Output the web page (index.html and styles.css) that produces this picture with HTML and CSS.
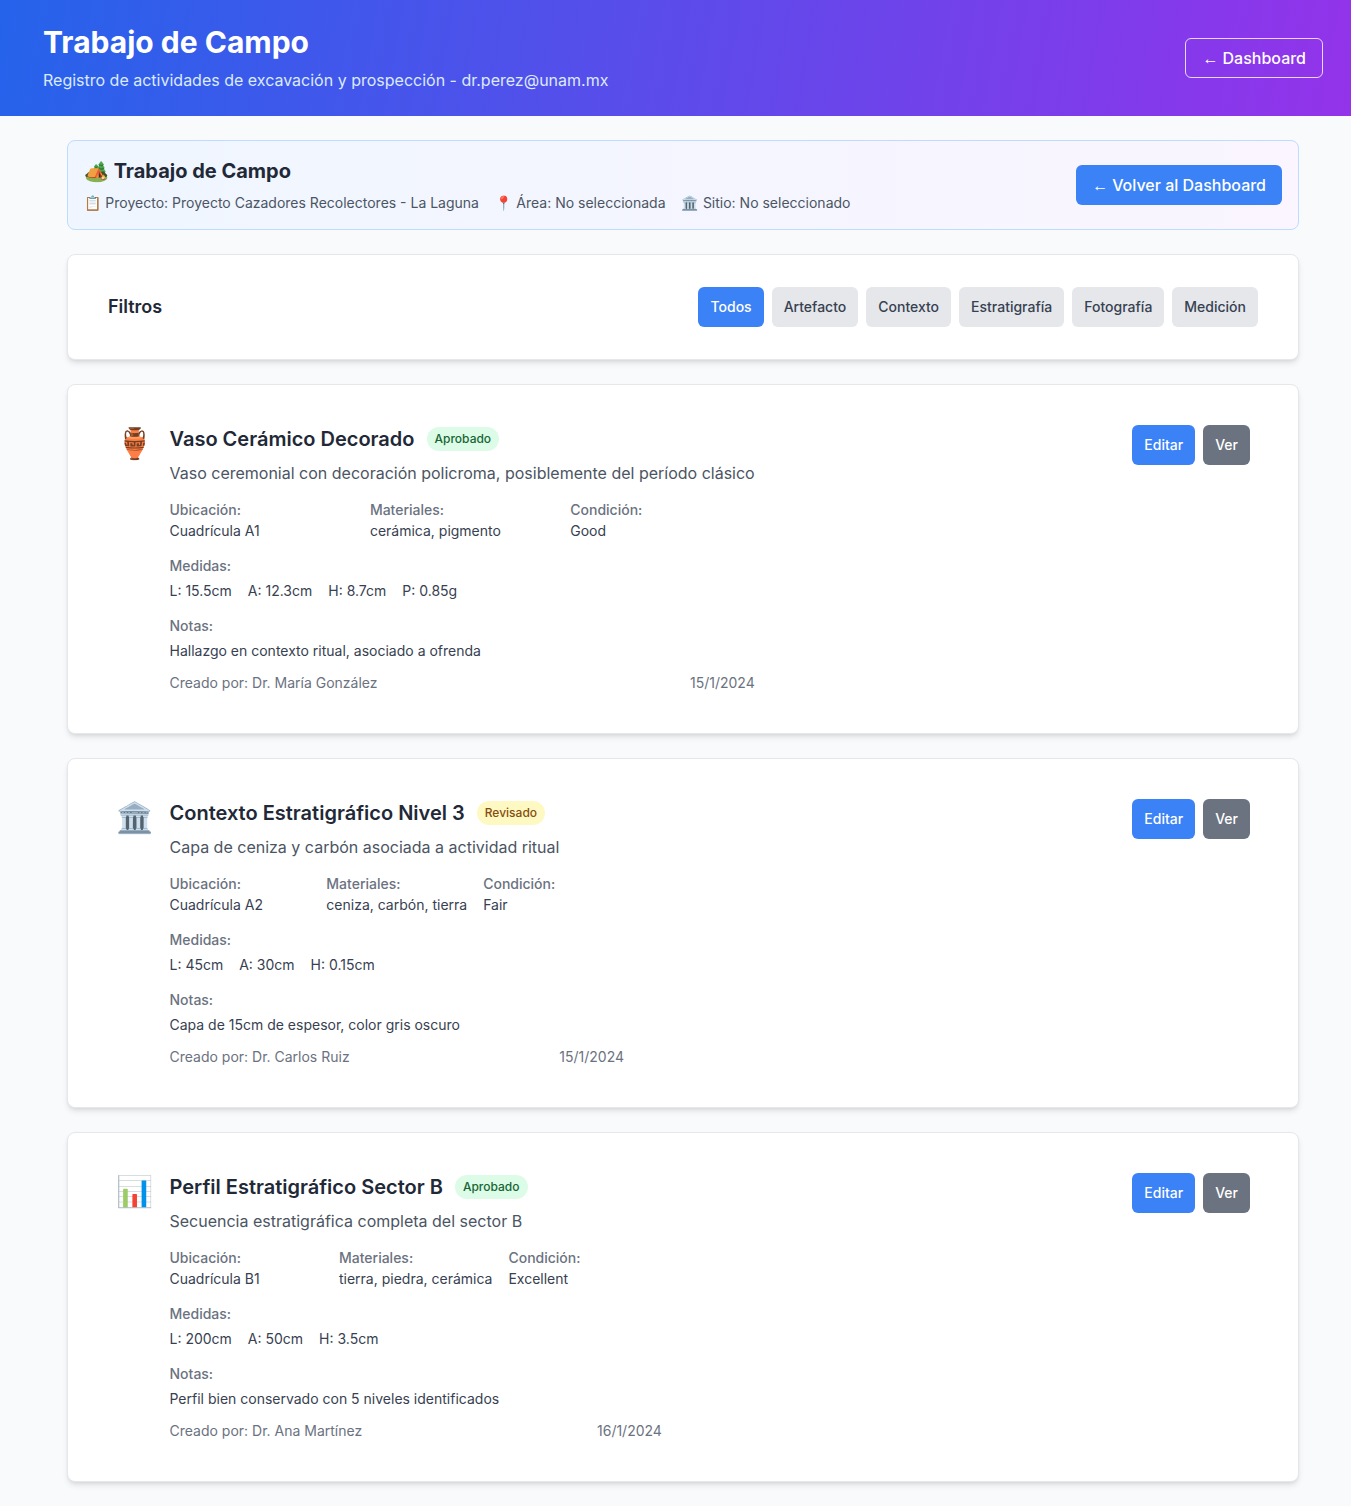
FILE: index.html
```html
<!DOCTYPE html>
<html lang="es">
<head>
  <meta charset="UTF-8">
  <title>Trabajo de Campo</title>
  <link rel="stylesheet" href="styles.css">
</head>
<body>
  <header class="top-header">
    <div>
      <h1 class="top-title">Trabajo de Campo</h1>
      <p class="top-subtitle">Registro de actividades de excavación y prospección - dr.perez@unam.mx</p>
    </div>
    <a class="btn-outline"><span class="arrow">←</span> Dashboard</a>
  </header>

  <main class="main">
    <section class="context-bar">
      <div>
        <h2 class="context-title">🏕️ Trabajo de Campo</h2>
        <div class="context-info">
          <span>📋 Proyecto: Proyecto Cazadores Recolectores - La Laguna</span>
          <span>📍 Área: No seleccionada</span>
          <span>🏛️ Sitio: No seleccionado</span>
        </div>
      </div>
      <a class="btn-back"><span class="arrow">←</span> Volver al Dashboard</a>
    </section>

    <section class="card filters">
      <h3 class="filters-title">Filtros</h3>
      <div class="filter-list">
        <button class="btn btn-blue">Todos</button>
        <button class="btn btn-light">Artefacto</button>
        <button class="btn btn-light">Contexto</button>
        <button class="btn btn-light">Estratigrafía</button>
        <button class="btn btn-light">Fotografía</button>
        <button class="btn btn-light">Medición</button>
      </div>
    </section>

    <article class="card record">
      <div class="record-icon">🏺</div>
      <div class="record-body">
        <div class="record-head">
          <h3 class="record-title">Vaso Cerámico Decorado</h3>
          <span class="badge badge-green">Aprobado</span>
        </div>
        <p class="record-desc">Vaso ceremonial con decoración policroma, posiblemente del período clásico</p>
        <div class="record-grid">
          <div><span class="label">Ubicación:</span><span class="value">Cuadrícula A1</span></div>
          <div><span class="label">Materiales:</span><span class="value">cerámica, pigmento</span></div>
          <div><span class="label">Condición:</span><span class="value">Good</span></div>
        </div>
        <div class="block">
          <span class="label">Medidas:</span>
          <div class="measures"><span>L: 15.5cm</span><span>A: 12.3cm</span><span>H: 8.7cm</span><span>P: 0.85g</span></div>
        </div>
        <div class="block">
          <span class="label">Notas:</span>
          <p class="note">Hallazgo en contexto ritual, asociado a ofrenda</p>
        </div>
        <div class="record-foot"><span>Creado por: Dr. María González</span><span>15/1/2024</span></div>
      </div>
      <div class="record-actions">
        <button class="btn btn-blue">Editar</button>
        <button class="btn btn-gray">Ver</button>
      </div>
    </article>

    <article class="card record">
      <div class="record-icon">🏛️</div>
      <div class="record-body">
        <div class="record-head">
          <h3 class="record-title">Contexto Estratigráfico Nivel 3</h3>
          <span class="badge badge-yellow">Revisado</span>
        </div>
        <p class="record-desc">Capa de ceniza y carbón asociada a actividad ritual</p>
        <div class="record-grid">
          <div><span class="label">Ubicación:</span><span class="value">Cuadrícula A2</span></div>
          <div><span class="label">Materiales:</span><span class="value">ceniza, carbón, tierra</span></div>
          <div><span class="label">Condición:</span><span class="value">Fair</span></div>
        </div>
        <div class="block">
          <span class="label">Medidas:</span>
          <div class="measures"><span>L: 45cm</span><span>A: 30cm</span><span>H: 0.15cm</span></div>
        </div>
        <div class="block">
          <span class="label">Notas:</span>
          <p class="note">Capa de 15cm de espesor, color gris oscuro</p>
        </div>
        <div class="record-foot"><span>Creado por: Dr. Carlos Ruiz</span><span>15/1/2024</span></div>
      </div>
      <div class="record-actions">
        <button class="btn btn-blue">Editar</button>
        <button class="btn btn-gray">Ver</button>
      </div>
    </article>

    <article class="card record">
      <div class="record-icon">📊</div>
      <div class="record-body">
        <div class="record-head">
          <h3 class="record-title">Perfil Estratigráfico Sector B</h3>
          <span class="badge badge-green">Aprobado</span>
        </div>
        <p class="record-desc">Secuencia estratigráfica completa del sector B</p>
        <div class="record-grid">
          <div><span class="label">Ubicación:</span><span class="value">Cuadrícula B1</span></div>
          <div><span class="label">Materiales:</span><span class="value">tierra, piedra, cerámica</span></div>
          <div><span class="label">Condición:</span><span class="value">Excellent</span></div>
        </div>
        <div class="block">
          <span class="label">Medidas:</span>
          <div class="measures"><span>L: 200cm</span><span>A: 50cm</span><span>H: 3.5cm</span></div>
        </div>
        <div class="block">
          <span class="label">Notas:</span>
          <p class="note">Perfil bien conservado con 5 niveles identificados</p>
        </div>
        <div class="record-foot"><span>Creado por: Dr. Ana Martínez</span><span>16/1/2024</span></div>
      </div>
      <div class="record-actions">
        <button class="btn btn-blue">Editar</button>
        <button class="btn btn-gray">Ver</button>
      </div>
    </article>
  </main>
</body>
</html>
```

FILE: styles.css
```css
* {
  box-sizing: border-box;
}

body {
  margin: 0;
  font-family: Inter, "Noto Color Emoji", sans-serif;
  background: #f9fafb;
  color: #1f2937;
}

h1, h2, h3, p {
  margin: 0;
}

.top-header {
  height: 116px;
  padding: 0 28px 0 43px;
  display: flex;
  align-items: center;
  justify-content: space-between;
  background: linear-gradient(100deg, #2563eb, #9333ea);
  color: #fff;
}

.top-title {
  font-size: 30px;
  line-height: 36px;
  font-weight: 700;
}

.top-subtitle {
  margin-top: 8px;
  font-size: 16px;
  line-height: 24px;
  color: #dbeafe;
}

.btn-outline {
  height: 40px;
  padding: 0 16px 0 17px;
  display: flex;
  align-items: center;
  gap: 4px;
  border: 1px solid rgba(255, 255, 255, 0.8);
  border-radius: 6px;
  font-size: 16px;
  font-weight: 500;
}

.arrow {
  position: relative;
  top: 1px;
  font-family: "Liberation Sans", sans-serif;
  font-weight: 400;
}

.main {
  padding: 24px 52px 24px 67px;
}

.context-bar {
  height: 90px;
  padding: 0 16px;
  display: flex;
  align-items: center;
  justify-content: space-between;
  border: 1px solid #bfdbfe;
  border-radius: 8px;
  background: linear-gradient(90deg, #eff6ff, #faf5ff);
}

.context-title {
  font-size: 20px;
  line-height: 28px;
  font-weight: 700;
  color: #1f2937;
}

.context-info {
  margin-top: 8px;
  display: flex;
  gap: 16px;
  font-size: 14px;
  line-height: 20px;
  color: #4b5563;
}

.btn-back {
  height: 40px;
  padding: 0 16px;
  display: flex;
  align-items: center;
  gap: 4px;
  border-radius: 6px;
  background: #3b82f6;
  color: #fff;
  font-size: 16px;
  font-weight: 500;
}

.card {
  margin-top: 24px;
  border: 1px solid #e5e7eb;
  border-radius: 8px;
  background: #fff;
  box-shadow: 0 4px 6px -1px rgba(0, 0, 0, 0.1), 0 2px 4px -2px rgba(0, 0, 0, 0.1);
}

.filters {
  padding: 32px 40px;
  display: flex;
  align-items: center;
  justify-content: space-between;
}

.filters-title {
  font-size: 18px;
  line-height: 28px;
  font-weight: 600;
}

.filter-list {
  display: flex;
  gap: 8px;
}

.btn {
  height: 40px;
  padding: 0 12px 2px;
  border: 0;
  border-radius: 6px;
  font-family: inherit;
  font-size: 14px;
  font-weight: 500;
}

.btn-blue {
  background: #3b82f6;
  color: #fff;
}

.btn-light {
  background: #e5e7eb;
  color: #374151;
}

.btn-gray {
  background: #6b7280;
  color: #fff;
}

.record {
  height: 350px;
  padding: 40px 48px 0 40px;
  display: flex;
  align-items: flex-start;
}

.record-icon {
  width: 54px;
  margin-right: 7.5px;
  flex-shrink: 0;
  text-align: center;
  font-size: 30px;
  line-height: 36px;
}

.record-body {
  width: fit-content;
}

.record-head {
  display: flex;
  align-items: center;
  gap: 12px;
}

.record-title {
  font-size: 20px;
  line-height: 28px;
  font-weight: 600;
  color: #1f2937;
}

.badge {
  padding: 0 8px;
  border-radius: 999px;
  font-size: 12px;
  line-height: 24px;
  font-weight: 500;
}

.badge-green {
  background: #dcfce7;
  color: #166534;
}

.badge-yellow {
  background: #fef9c3;
  color: #854d0e;
}

.record-desc {
  margin-top: 8px;
  font-size: 16px;
  line-height: 24px;
  color: #4b5563;
}

.record-grid {
  margin-top: 15px;
  display: grid;
  grid-template-columns: repeat(3, 1fr);
  gap: 16px;
  font-size: 14px;
  line-height: 20px;
}

.label {
  display: block;
  font-size: 14px;
  line-height: 20px;
  font-weight: 500;
  color: #6b7280;
}

.value {
  display: block;
  margin-top: 1px;
  color: #374151;
}

.block {
  margin-top: 15px;
}

.measures {
  margin-top: 5px;
  display: flex;
  gap: 16px;
  font-size: 14px;
  line-height: 20px;
  color: #374151;
}

.note {
  margin-top: 5px;
  font-size: 14px;
  line-height: 20px;
  color: #374151;
}

.record-foot {
  margin-top: 12px;
  display: flex;
  justify-content: space-between;
  font-size: 14px;
  line-height: 20px;
  color: #6b7280;
}

.record-actions {
  margin-left: auto;
  display: flex;
  gap: 8px;
}
```
